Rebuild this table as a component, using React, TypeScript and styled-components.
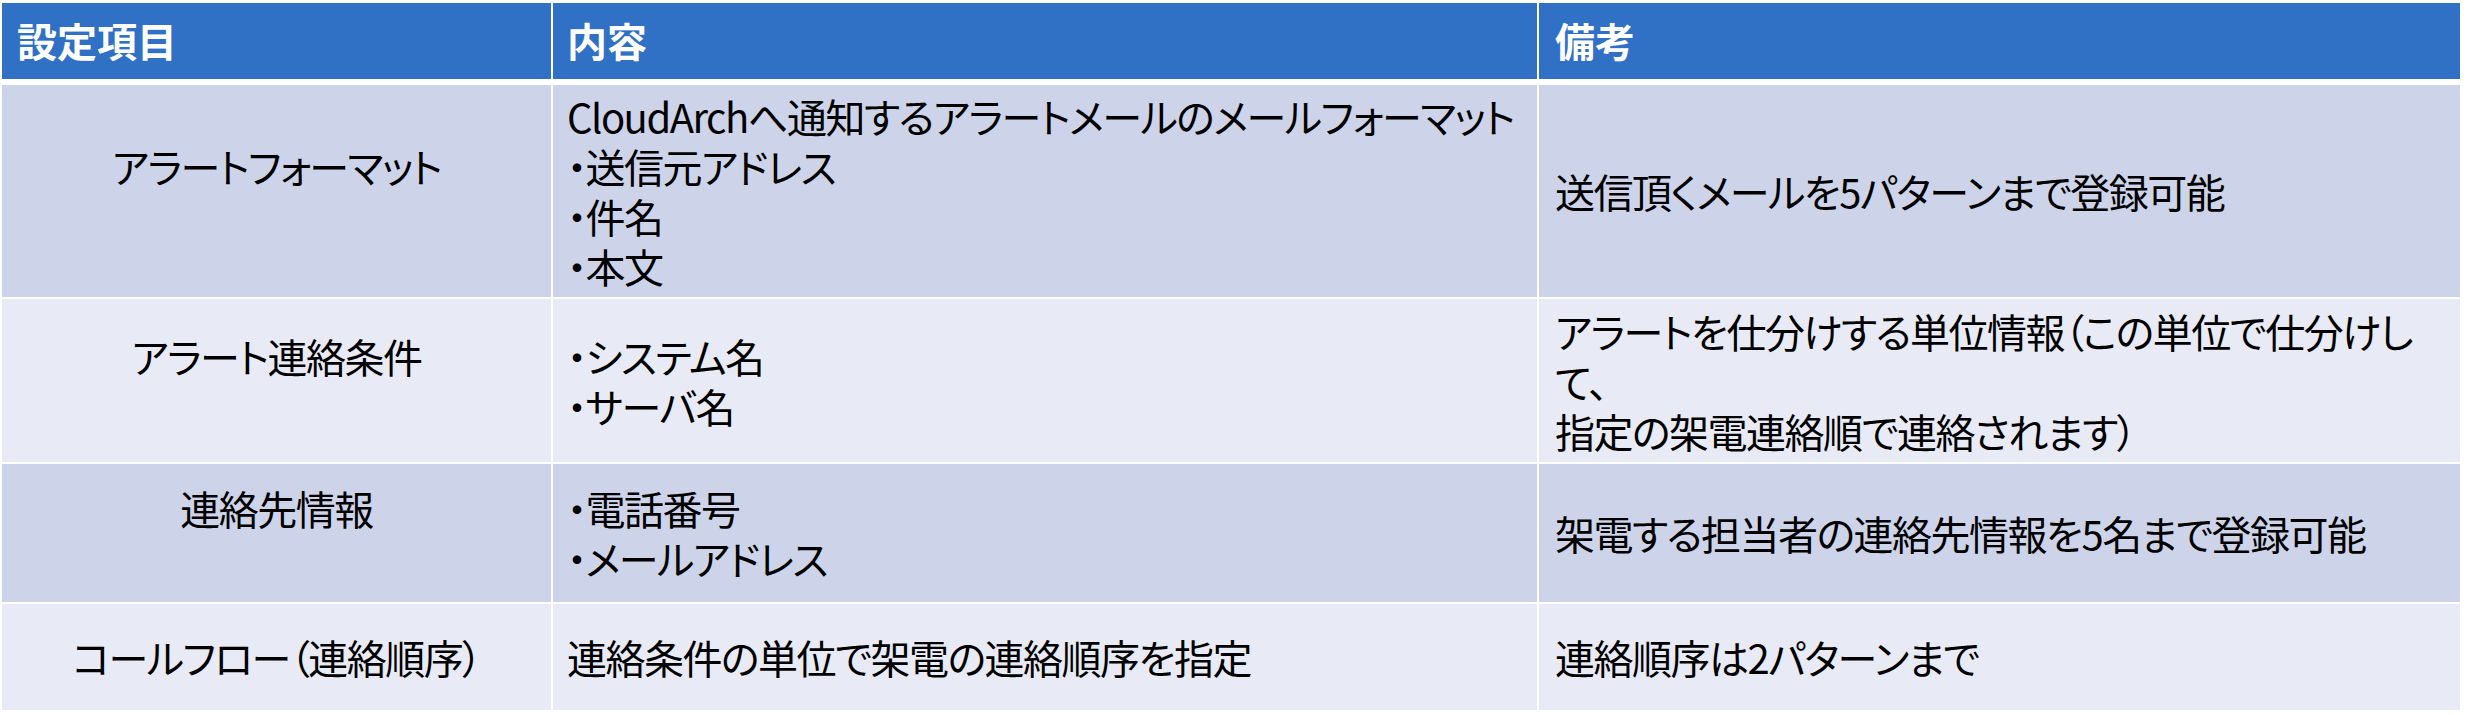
import React from 'react';
import styled, { createGlobalStyle } from 'styled-components';

interface SettingRow {
  item: string;
  content: string[];
  note: string[];
  tone: 'dark' | 'light';
  height: number;
  // 左列は末尾に空行が入っているので半行ぶん上に寄る
  lift: boolean;
}

const rows: SettingRow[] = [
  {
    item: 'アラートフォーマット',
    content: [
      'CloudArchへ通知するアラートメールのメールフォーマット',
      '・送信元アドレス',
      '・件名',
      '・本文',
    ],
    note: ['送信頂くメールを5パターンまで登録可能'],
    tone: 'dark',
    height: 212,
    lift: true,
  },
  {
    item: 'アラート連絡条件',
    content: ['・システム名', '・サーバ名'],
    note: [
      'アラートを仕分けする単位情報（この単位で仕分けし',
      'て、',
      '指定の架電連絡順で連絡されます）',
    ],
    tone: 'light',
    height: 163,
    lift: true,
  },
  {
    item: '連絡先情報',
    content: ['・電話番号', '・メールアドレス'],
    note: ['架電する担当者の連絡先情報を5名まで登録可能'],
    tone: 'dark',
    height: 138,
    lift: true,
  },
  {
    item: 'コールフロー（連絡順序）',
    content: ['連絡条件の単位で架電の連絡順序を指定'],
    note: ['連絡順序は2パターンまで'],
    tone: 'light',
    height: 106,
    lift: false,
  },
];

const App = () => {
  return (
    <>
      <GlobalStyle />
      <Page>
        <Table>
          <HeaderRow>
            <HeaderCell>設定項目</HeaderCell>
            <HeaderCell>内容</HeaderCell>
            <HeaderCell>備考</HeaderCell>
          </HeaderRow>
          {rows.map(row => (
            <BodyRow key={row.item} $height={row.height}>
              <ItemCell $tone={row.tone} $lift={row.lift}>
                {row.item}
              </ItemCell>
              <TextCell $tone={row.tone}>
                {row.content.map(line => (
                  <Line key={line}>{line}</Line>
                ))}
              </TextCell>
              <TextCell $tone={row.tone}>
                {row.note.map(line => (
                  <Line key={line}>{line}</Line>
                ))}
              </TextCell>
            </BodyRow>
          ))}
        </Table>
      </Page>
    </>
  );
};

export default App;

const GlobalStyle = createGlobalStyle`
  html, body {
    margin: 0;
    padding: 0;
    background: #ffffff;
  }

  body {
    font-family: "Noto Sans CJK JP", "Noto Sans", sans-serif;
    font-feature-settings: "palt";
    color: #000000;
  }
`;

const Page = styled.div`
  width: 2467px;
  height: 715px;
  padding: 3px 0 0 2px;
  box-sizing: border-box;
  overflow: hidden;
`;

const Table = styled.div`
  display: flex;
  flex-direction: column;
  gap: 2px;
  width: 2458px;
`;

const columns = '549px 984px 921px';

const HeaderRow = styled.div`
  display: grid;
  grid-template-columns: ${columns};
  column-gap: 2px;
  height: 76px;
  margin-bottom: 4px;
`;

const HeaderCell = styled.div`
  display: flex;
  align-items: center;
  padding: 0 0 2px 15px;
  background-color: #3070c5;
  color: #ffffff;
  font-size: 40px;
  font-weight: bold;
  line-height: 50px;

  & + & {
    padding-left: 14px;
  }

  &:last-child {
    padding-left: 16px;
  }
`;

const BodyRow = styled.div<{ $height: number }>`
  display: grid;
  grid-template-columns: ${columns};
  column-gap: 2px;
  height: ${p => p.$height}px;
`;

const Cell = styled.div<{ $tone: 'dark' | 'light' }>`
  display: flex;
  flex-direction: column;
  justify-content: center;
  background-color: ${p => (p.$tone === 'dark' ? '#cdd4ea' : '#e8ebf5')};
  font-size: 40px;
  line-height: 50px;
  letter-spacing: -1.5px;
  white-space: nowrap;
  overflow: hidden;
`;

const ItemCell = styled(Cell)<{ $lift: boolean }>`
  align-items: center;
  text-align: center;
  padding-bottom: ${p => (p.$lift ? '50px' : '0')};
`;

const TextCell = styled(Cell)`
  padding-left: 14px;

  &:last-child {
    padding-left: 16px;
  }
`;

const Line = styled.span`
  display: block;
`;
